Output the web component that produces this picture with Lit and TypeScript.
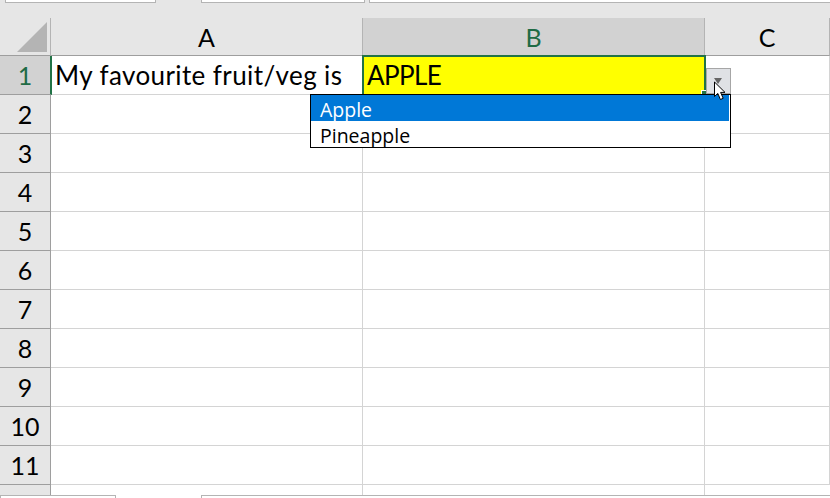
import { LitElement, css, html } from 'lit'
import { customElement } from 'lit/decorators.js'

const COLS = ['A', 'B', 'C']
const ROWS = [1, 2, 3, 4, 5, 6, 7, 8, 9, 10, 11]

@customElement('app-root')
class AppRoot extends LitElement {
  static styles = css`
    :host {
      display: block;
      width: 830px;
      height: 498px;
      overflow: hidden;
      position: relative;
      background: #e6e6e6;
      font-family: Lato, 'Open Sans', sans-serif;
      color: #000;
    }
    .formula {
      height: 18px;
      display: flex;
      align-items: flex-start;
    }
    .box {
      background: #fff;
      border: 1px solid #b4b4b4;
      border-top: 0;
      box-sizing: border-box;
      height: 3px;
    }
    .name { width: 151px; margin-left: 5px; }
    .fx { width: 164px; margin-left: 45px; }
    .input { flex: 1; margin-left: 4px; border-right: 0; }
    .sheet {
      display: grid;
      grid-template-columns: 51px 312px 342px 125px;
      grid-template-rows: 38px repeat(11, 39px) 1fr;
      height: 480px;
    }
    .corner {
      display: flex;
      align-items: flex-end;
      justify-content: flex-end;
      padding: 0 3px 3px 0;
      box-sizing: border-box;
      border-right: 1px solid #b4b4b4;
      border-bottom: 1px solid #9e9e9e;
    }
    .col {
      display: flex;
      align-items: center;
      justify-content: center;
      font-size: 25px;
      border-right: 1px solid #b4b4b4;
      border-bottom: 1px solid #9e9e9e;
      box-sizing: border-box;
    }
    .col.on {
      background: #d2d2d2;
      color: #1f6b45;
      border-left: 1px solid #b4b4b4;
      margin-left: -1px;
    }
    .col:last-of-type { border-right: 0; }
    .row {
      display: flex;
      align-items: center;
      justify-content: center;
      font-size: 25px;
      border-right: 1px solid #9e9e9e;
      border-bottom: 1px solid #9e9e9e;
      box-sizing: border-box;
    }
    .row.on {
      background: #d2d2d2;
      color: #1f6b45;
      border-right: 2px solid #217346;
      margin-right: -1px;
      position: relative;
      z-index: 1;
    }
    .cell {
      background: #fff;
      border-right: 1px solid #d4d4d4;
      border-bottom: 1px solid #d4d4d4;
      box-sizing: border-box;
      font-size: 26px;
      line-height: 38px;
      white-space: nowrap;
      padding-left: 4px;
    }
    .cell.text { letter-spacing: 0.4px; }
    .cell.sel {
      background: #ffff00;
      outline: 2px solid #217346;
      outline-offset: -1px;
      position: relative;
      z-index: 1;
      letter-spacing: -0.6px;
    }
    .handle {
      position: absolute;
      right: -2px;
      bottom: -1px;
      width: 4px;
      height: 4px;
      background: #217346;
      border-left: 1px solid #fff;
      border-top: 1px solid #fff;
    }
    .foot {
      background: #fff;
      grid-column: 1 / -1;
      position: relative;
      display: grid;
      grid-template-columns: 51px 312px 342px 125px;
    }
    .foot .stub {
      background: #e6e6e6;
      border-right: 1px solid #9e9e9e;
    }
    .foot .gap { border-right: 1px solid #d4d4d4; }
    .tab {
      position: absolute;
      top: 10px;
      height: 3px;
      background: #fff;
      border: 1px solid #b4b4b4;
      border-bottom: 0;
      box-sizing: border-box;
    }
    .tab.a { left: 0; width: 116px; }
    .tab.b { left: 201px; right: 0; border-right: 0; }
    .drop-btn {
      position: absolute;
      left: 706px;
      top: 68px;
      width: 25px;
      height: 26px;
      box-sizing: border-box;
      background: #dfe1e5;
      border: 1px solid #a6a6a6;
      z-index: 2;
    }
    .drop-btn::after {
      content: '';
      position: absolute;
      left: 7px;
      top: 9px;
      border: 4.5px solid transparent;
      border-top: 6px solid #666;
      border-bottom: 0;
    }
    .list {
      position: absolute;
      left: 310px;
      top: 94px;
      width: 421px;
      height: 54px;
      box-sizing: border-box;
      background: #fff;
      border: 1px solid #000;
      z-index: 3;
      font-family: 'Open Sans', 'Noto Sans', sans-serif;
      font-size: 19.5px;
      line-height: 29px;
    }
    .opt { padding-left: 9px; height: 26px; }
    .opt.on { background: #0078d7; color: #fff; margin-right: 1px; }
    .cursor {
      position: absolute;
      left: 713px;
      top: 81px;
      z-index: 4;
    }
  `

  render() {
    return html`
      <div class="formula">
        <div class="box name"></div>
        <div class="box fx"></div>
        <div class="box input"></div>
      </div>
      <div class="sheet">
        <div class="corner">
          <svg width="30" height="30" viewBox="0 0 30 30"><path d="M30 0V30H0Z" fill="#b4b4b4" /></svg>
        </div>
        ${COLS.map((c) => html`<div class="col ${c === 'B' ? 'on' : ''}">${c}</div>`)}
        ${ROWS.map(
          (r) => html`
            <div class="row ${r === 1 ? 'on' : ''}">${r}</div>
            <div class="cell text">${r === 1 ? 'My favourite fruit/veg is' : ''}</div>
            <div class="cell ${r === 1 ? 'sel' : ''}">
              ${r === 1 ? html`APPLE<span class="handle"></span>` : ''}
            </div>
            <div class="cell"></div>
          `
        )}
        <div class="foot">
          <div class="stub"></div>
          <div class="gap"></div>
          <div class="gap"></div>
          <div></div>
          <div class="tab a"></div>
          <div class="tab b"></div>
        </div>
      </div>
      <div class="drop-btn"></div>
      <div class="list">
        <div class="opt on">Apple</div>
        <div class="opt">Pineapple</div>
      </div>
      <svg class="cursor" width="14" height="20" viewBox="0 0 14 20">
        <path d="M1.5 1V15.5L4.8 12.4L7.4 18.5L10.2 17.3L7.6 11.4H12Z" fill="#fff" stroke="#000" stroke-width="1" />
      </svg>
    `
  }
}
